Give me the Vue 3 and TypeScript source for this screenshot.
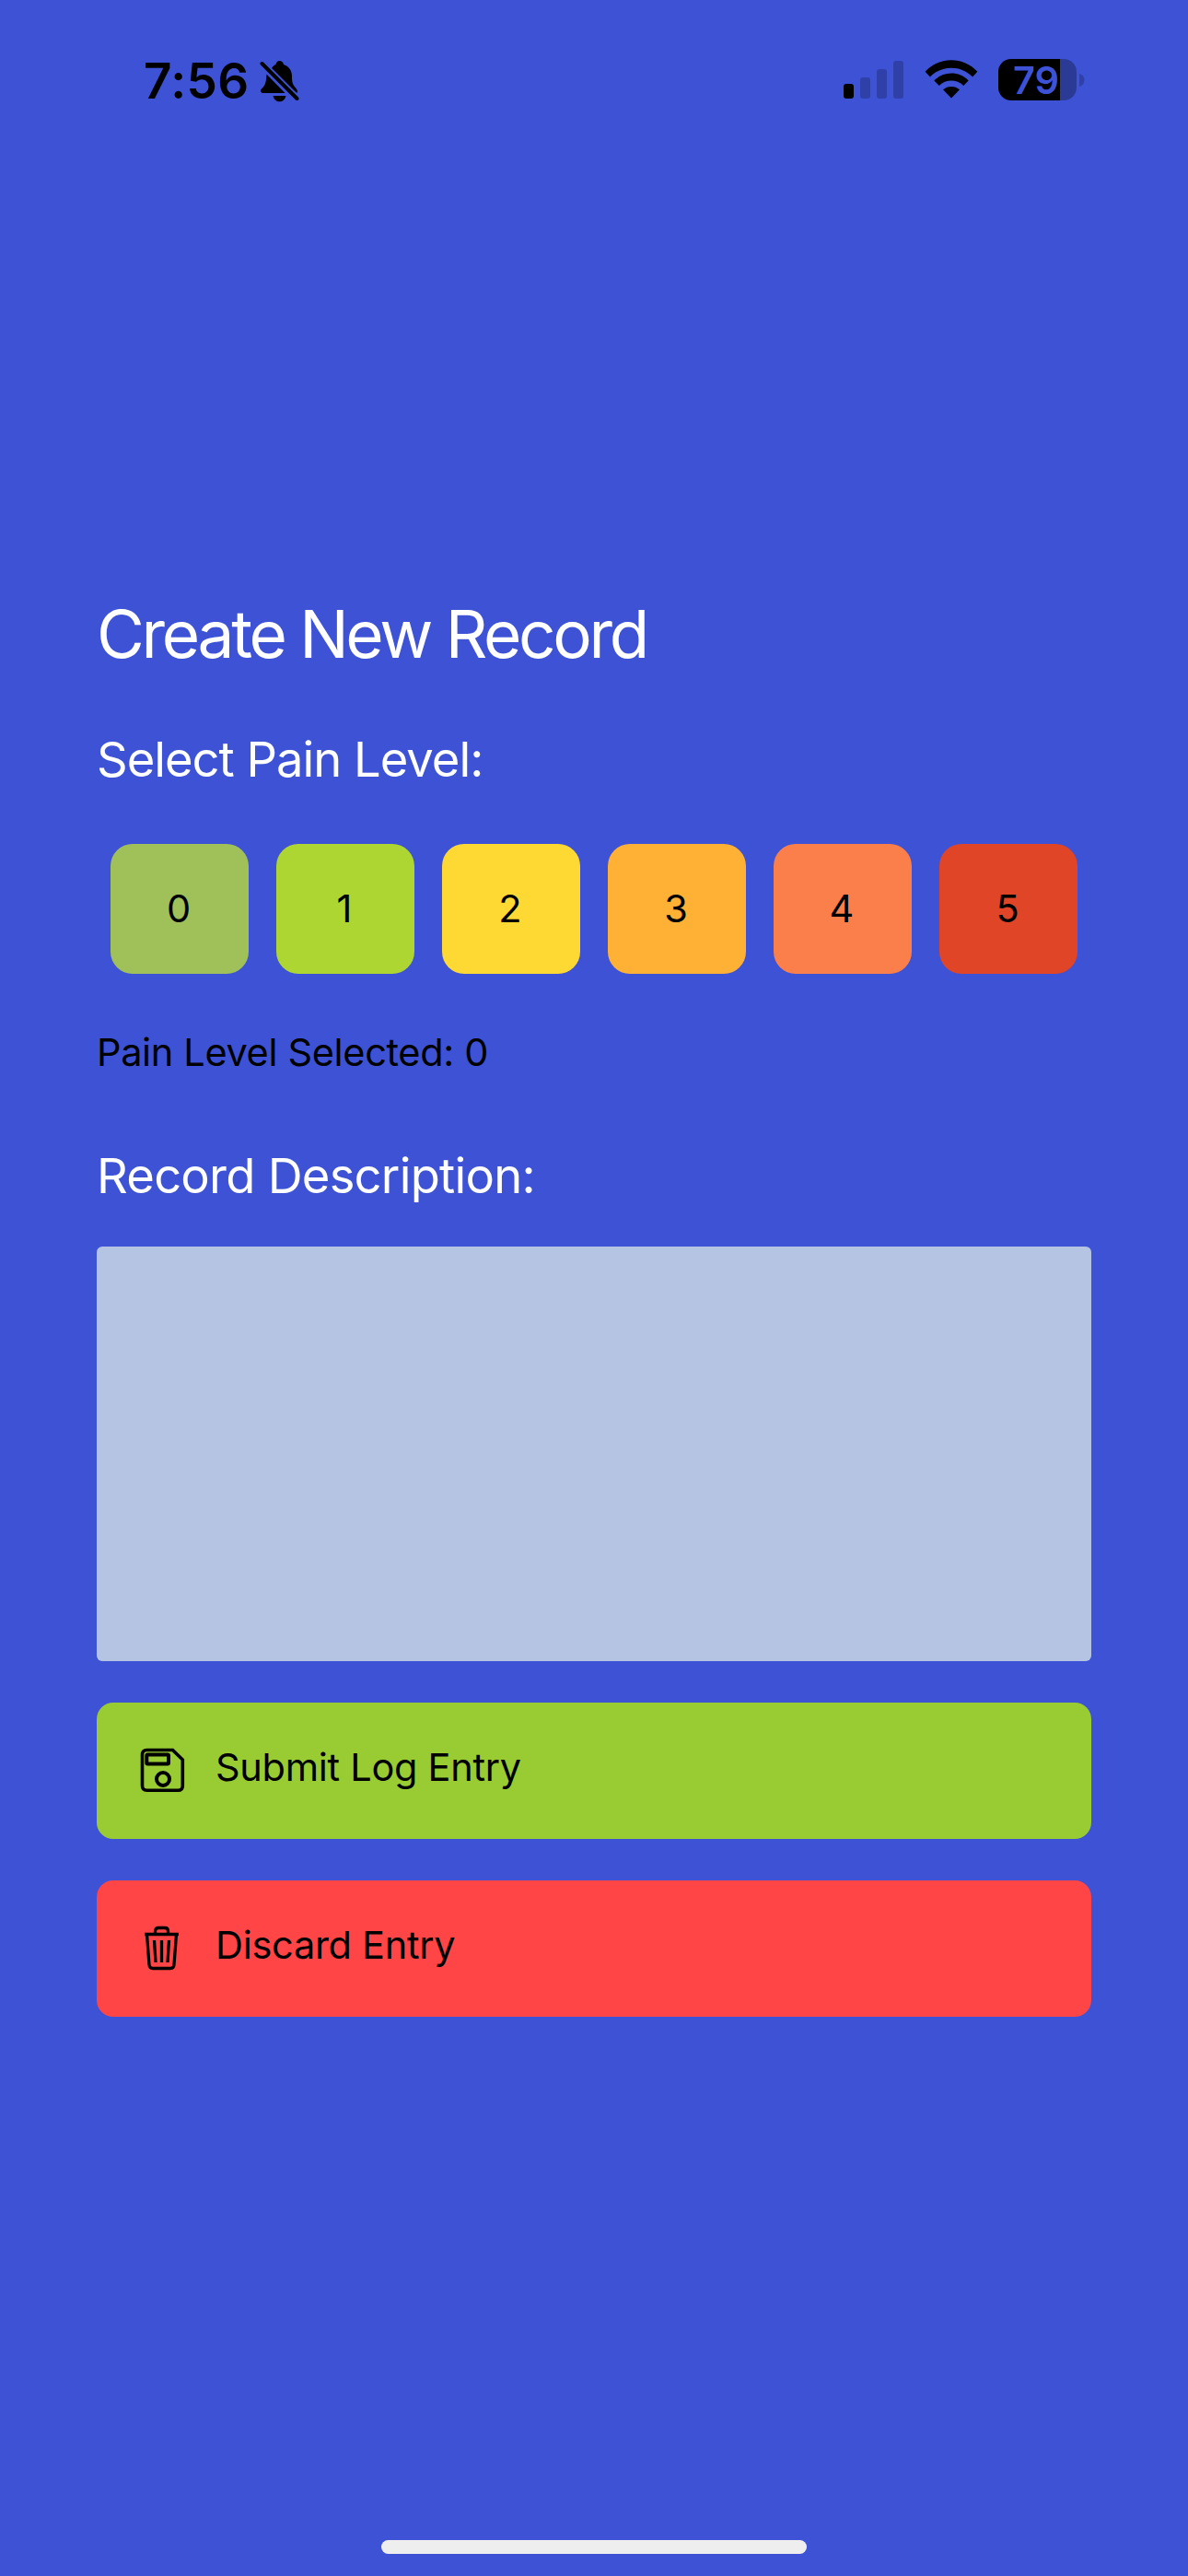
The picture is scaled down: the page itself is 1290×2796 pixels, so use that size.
<script setup lang="ts">
import { ref } from 'vue'

interface PainLevel {
  value: number
  color: string
}

const levels: PainLevel[] = [
  { value: 0, color: '#a0c15a' },
  { value: 1, color: '#add633' },
  { value: 2, color: '#ffd933' },
  { value: 3, color: '#ffb135' },
  { value: 4, color: '#fb7f4a' },
  { value: 5, color: '#df4526' },
]
const selected = ref(0)
const description = ref('')
</script>

<template>
  <div class="screen">
    <header class="status">
      <div class="clock">
        <span class="time">7:56</span>
        <svg class="bell" width="44" height="48" viewBox="0 0 44 48">
          <path d="M12 11C13.500 7.500 15.500 6 17.500 5C18 2.500 19.500 1 21.500 1S25.500 2.500 26 5C32 7 35 12 35 18C35 25 36 27 39.500 31C41 32.700 41 34 41 35.500H36Z" />
          <path d="M7.500 15.500L27.500 36H4C1.500 36 0 34 1.500 32C5.500 28 7 26 7.500 15.500Z" />
          <path d="M14.500 39H28.500C27.500 43 25 45.300 21.500 45.300S15.500 43 14.500 39Z" />
          <path d="M2.500 4L40.500 42" fill="none" stroke="#3e52d5" stroke-width="8" />
          <path d="M2.500 4L40.500 42" fill="none" stroke="#000" stroke-width="4" stroke-linecap="round" />
        </svg>
      </div>
      <div class="indicators">
        <svg class="signal" width="66" height="42" viewBox="0 0 66 42">
          <rect x="0" y="25" width="11" height="16" rx="3" />
          <g fill="#2f41a9">
            <rect x="18" y="18" width="11" height="23" rx="3" />
            <rect x="36" y="9" width="11" height="32" rx="3" />
            <rect x="54" y="0" width="11" height="41" rx="3" />
          </g>
        </svg>
        <svg class="wifi" width="58" height="42" viewBox="0 0 58 42">
          <path d="M0.600 12.800C16 -4 42 -4 57.400 12.800L52 18.400C39.500 5.400 18.500 5.400 6 18.400Z" />
          <path d="M10.300 22.500C20.500 11.900 37.500 11.900 47.700 22.500L42.200 28C35 20.800 23 20.800 15.800 28Z" />
          <path d="M20 32.300C25 27.800 33 27.800 38 32.300L29 41.500Z" />
        </svg>
        <div class="battery">
          <div class="cell"><span class="pct">79</span></div>
          <svg width="6" height="14" viewBox="0 0 6 14"><path d="M0 0C3.500 1 5.500 3.500 5.500 7S3.500 13 0 14Z" fill="#2f41a9" /></svg>
        </div>
      </div>
    </header>

    <main class="form">
      <h1 class="title">Create New Record</h1>
      <h2 class="label pain">Select Pain Level:</h2>
      <div class="levels">
        <button
          v-for="level in levels"
          :key="level.value"
          class="level"
          :style="{ backgroundColor: level.color }"
          @click="selected = level.value"
        >{{ level.value }}</button>
      </div>
      <p class="selected">Pain Level Selected: {{ selected }}</p>
      <h2 class="label desc">Record Description:</h2>
      <textarea v-model="description" class="entry"></textarea>
      <button class="action submit">
        <svg class="icon" width="50" height="50" viewBox="0 0 50 50" fill="none" stroke="#000" stroke-width="3.600">
          <path d="M7.500 2.500H35.500L46.300 13V41.300Q46.300 46.300 41.300 46.300H7.500Q2.500 46.300 2.500 41.300V7.500Q2.500 2.500 7.500 2.500Z" />
          <rect x="7.300" y="7.500" width="23.700" height="10" rx="1" stroke-width="4" />
          <circle cx="25" cy="34" r="7" stroke-width="4" />
        </svg>
        <span>Submit Log Entry</span>
      </button>
      <button class="action discard">
        <svg class="icon" width="50" height="50" viewBox="0 0 50 50" fill="none" stroke="#000" stroke-width="3.300">
          <path d="M5 9.500H42M7.500 9.500L10 42.500Q10.300 46.500 14 46.500H33Q36.700 46.500 37 42.500L39.500 9.500" />
          <path d="M16.500 9V6Q16.500 2.500 20 2.500H27Q30.500 2.500 30.500 6V9" />
          <path d="M15.500 16L17 40M23.500 16V40M31.500 16L30 40" />
        </svg>
        <span>Discard Entry</span>
      </button>
    </main>

    <div class="home"></div>
  </div>
</template>

<style>
body {
  margin: 0;
  background: #3e52d5;
}
</style>

<style scoped>
.screen {
  box-sizing: border-box;
  width: 1290px;
  height: 2796px;
  overflow: hidden;
  display: flex;
  flex-direction: column;
  background: #3e52d5;
  color: #000;
  font-family: Inter, 'Liberation Sans', sans-serif;
}
.status {
  flex: none;
  height: 172px;
  box-sizing: border-box;
  padding: 56px 112px 0 156px;
  display: flex;
  justify-content: space-between;
  align-items: flex-start;
}
.clock,
.indicators,
.battery {
  display: flex;
}
.time {
  width: 126px;
  font-size: 53px;
  line-height: 64px;
  font-weight: 600;
  letter-spacing: 0.4px;
}
.bell {
  margin-top: 9px;
}
.signal {
  margin: 10px 22px 0 0;
}
.wifi {
  margin: 9px 22px 0 0;
}
.battery {
  margin-top: 8px;
  align-items: center;
  gap: 3px;
}
.cell {
  width: 85px;
  height: 45px;
  border-radius: 14px;
  background: linear-gradient(90deg, #000 67px, #2b3a95 67px);
  color: #3e52d5;
}
.pct {
  display: block;
  padding-left: 16px;
  font-size: 41.5px;
  line-height: 46px;
  font-weight: 600;
}
.form {
  flex: 1;
  display: flex;
  flex-direction: column;
  padding: 473px 105px 0;
}
h1,
h2,
p {
  margin: 0;
  font-weight: 400;
  white-space: nowrap;
}
.title {
  color: #fff;
  font-size: 71px;
  line-height: 86px;
  letter-spacing: -3.3px;
}
.label {
  color: #fff;
  font-size: 52.5px;
  line-height: 64px;
}
.pain {
  margin-top: 61px;
  letter-spacing: -1px;
}
.levels {
  display: flex;
  gap: 30px;
  margin: 60px 15px 0;
}
button {
  border: 0;
  padding: 0;
  color: #000;
  font-family: inherit;
  font-size: 41.5px;
  line-height: 50px;
}
.level {
  width: 150px;
  height: 141px;
  padding-right: 2px;
  padding-bottom: 1px;
  border-radius: 24px;
}
.selected {
  margin-top: 60px;
  font-size: 41.5px;
  line-height: 50px;
  letter-spacing: -0.35px;
}
.desc {
  margin-top: 77px;
  letter-spacing: -0.75px;
}
.entry {
  flex: none;
  box-sizing: border-box;
  width: 1080px;
  height: 450px;
  margin: 45px 0 0;
  padding: 20px;
  border: 0;
  border-radius: 6px;
  background: #b4c4e2;
  resize: none;
  font: inherit;
  font-size: 41.5px;
}
.action {
  flex: none;
  display: flex;
  align-items: flex-start;
  height: 148px;
  margin-top: 45px;
  padding: 45px 46px;
  border-radius: 18px;
  letter-spacing: -0.28px;
}
.icon {
  margin: 4px 32px 0 1px;
}
.submit {
  background: #99cc33;
}
.discard {
  background: #ff4545;
}
.home {
  width: 462px;
  height: 15px;
  margin: 0 auto 24px;
  border-radius: 8px;
  background: #eeeeee;
}
</style>
